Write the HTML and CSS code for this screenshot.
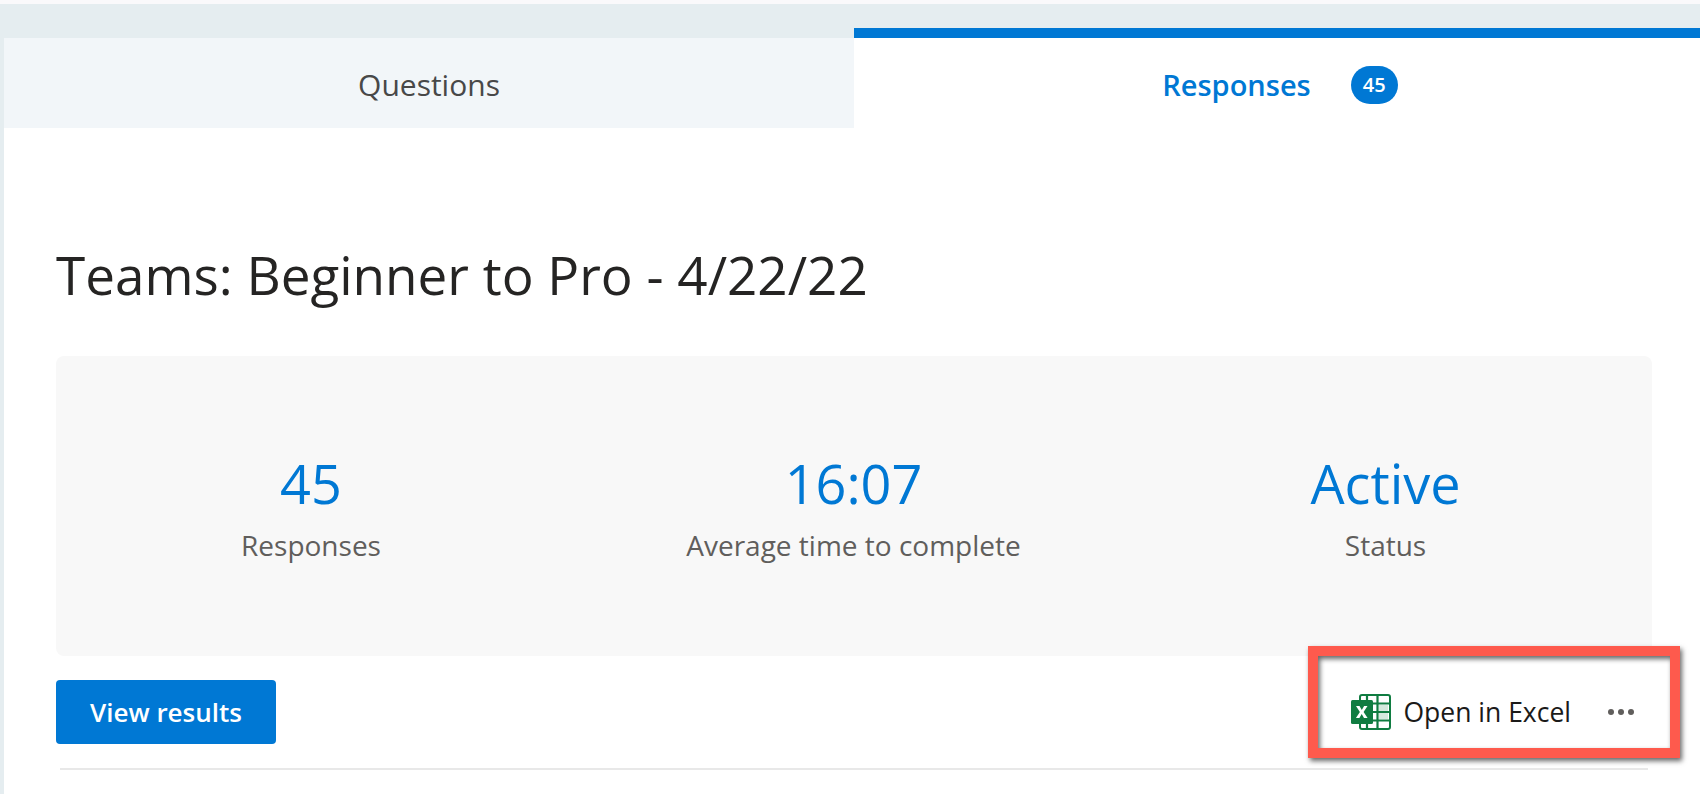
FILE: index.html
```html
<!DOCTYPE html>
<html lang="en">
<head>
    <meta charset="UTF-8">
    <meta name="viewport" content="width=device-width, initial-scale=1.0">
    <title>Responses</title>
    <link rel="stylesheet" href="styles.css">
</head>
<body>
    <div class="tabs">
        <div class="tab tab-questions">Questions</div>
        <div class="tab tab-responses">
            <span class="tab-label">Responses</span>
            <span class="badge">45</span>
        </div>
    </div>

    <main class="content">
        <h1 class="title">Teams: Beginner to Pro - 4/22/22</h1>

        <section class="summary">
            <div class="stat">
                <div class="stat-value">45</div>
                <div class="stat-label">Responses</div>
            </div>
            <div class="stat">
                <div class="stat-value">16:07</div>
                <div class="stat-label">Average time to complete</div>
            </div>
            <div class="stat">
                <div class="stat-value">Active</div>
                <div class="stat-label">Status</div>
            </div>
        </section>

        <div class="actions">
            <button class="button-primary">View results</button>
            <div class="excel">
                <svg class="excel-icon" viewBox="0 0 40 36" width="40" height="36">
                    <rect x="9" y="1" width="30" height="34" rx="2" fill="#fff" stroke="#107c41" stroke-width="2"/>
                    <path d="M16 1v34M26.500 1v34M9 9.500h30M21 18h18M9 26.500h30" stroke="#107c41" stroke-width="2.200" fill="none"/>
                    <path d="M28 11h9v6h-9zM28 19h9v6h-9z" fill="#d5e9dd"/>
                    <rect x="0" y="6" width="22" height="24" rx="1.500" fill="#107c41"/>
                    <path d="M5 12h3.500l2.300 4 2.300-4h3.400l-3.900 6 4 6h-3.600l-2.300-4-2.300 4h-3.500l4-6z" fill="#fff"/>
                </svg>
                <span class="excel-label">Open in Excel</span>
                <span class="dots"><i></i><i></i><i></i></span>
            </div>
            <div class="callout"></div>
        </div>

        <hr class="divider">
    </main>
</body>
</html>
```

FILE: styles.css
```css
* {
    margin: 0;
    padding: 0;
    box-sizing: border-box;
}

html {
    background-color: #faf9fb;
}

body {
    height: 790px;
    margin-top: 4px;
    padding: 24px 0 0 4px;
    background-color: #e5edf0;
    font-family: "Open Sans", sans-serif;
    overflow: hidden;
}

.tabs {
    display: flex;
    height: 100px;
}

.tab {
    display: flex;
    align-items: center;
    justify-content: center;
    font-size: 30px;
    line-height: 40px;
}

.tab-questions {
    width: 850px;
    margin-top: 10px;
    padding-top: 4px;
    background-color: #f2f6f9;
    color: #484848;
}

.tab-responses {
    flex: 1;
    gap: 40px;
    padding-left: 6px;
    padding-top: 3px;
    border-top: 10px solid #0078d4;
    background-color: #ffffff;
    color: #0078d4;
    font-size: 29px;
    font-weight: 600;
}

.badge {
    display: flex;
    align-items: center;
    justify-content: center;
    width: 47px;
    height: 38px;
    border-radius: 19px;
    background-color: #0078d4;
    color: #ffffff;
    font-size: 20px;
}

.content {
    height: 666px;
    padding: 0 48px 0 52px;
    background-color: #ffffff;
}

.title {
    padding-top: 113px;
    font-size: 53px;
    line-height: 68px;
    font-weight: 400;
    color: #252423;
}

.summary {
    display: grid;
    grid-template-columns: 510px 575px 489px;
    height: 300px;
    margin-top: 47px;
    padding-top: 94px;
    border-radius: 8px;
    background-color: #f8f8f8;
    text-align: center;
}

.stat-value {
    font-size: 54px;
    line-height: 66px;
    color: #0078d4;
}

.stat-label {
    margin-top: 11px;
    font-size: 28px;
    line-height: 36px;
    color: #605e5c;
}

.actions {
    position: relative;
    display: flex;
    align-items: center;
    justify-content: space-between;
    height: 64px;
    margin-top: 24px;
}

.button-primary {
    width: 220px;
    height: 64px;
    border: none;
    border-radius: 4px;
    background-color: #0078d4;
    color: #ffffff;
    font-family: inherit;
    font-size: 26px;
    font-weight: 600;
}

.excel {
    display: flex;
    align-items: center;
    margin-right: 18px;
}

.excel-label {
    margin-left: 12px;
    font-size: 26.500px;
    color: #1b1a19;
}

.dots {
    display: flex;
    gap: 4px;
    margin-left: 37px;
}

.dots i {
    width: 6px;
    height: 6px;
    border-radius: 50%;
    background-color: #605e5c;
}

/* red annotation box drawn over the toolbar */
.callout {
    position: absolute;
    top: -34px;
    right: -28px;
    width: 372px;
    height: 112px;
    border: 10px solid #fe5a4d;
    box-shadow: 2px 3px 5px rgba(0, 0, 0, 0.6), inset 2px 3px 5px rgba(0, 0, 0, 0.6);
    pointer-events: none;
}

.divider {
    height: 2px;
    margin: 24px 4px 0 4px;
    border: none;
    background-color: #e8e8e8;
}
```
